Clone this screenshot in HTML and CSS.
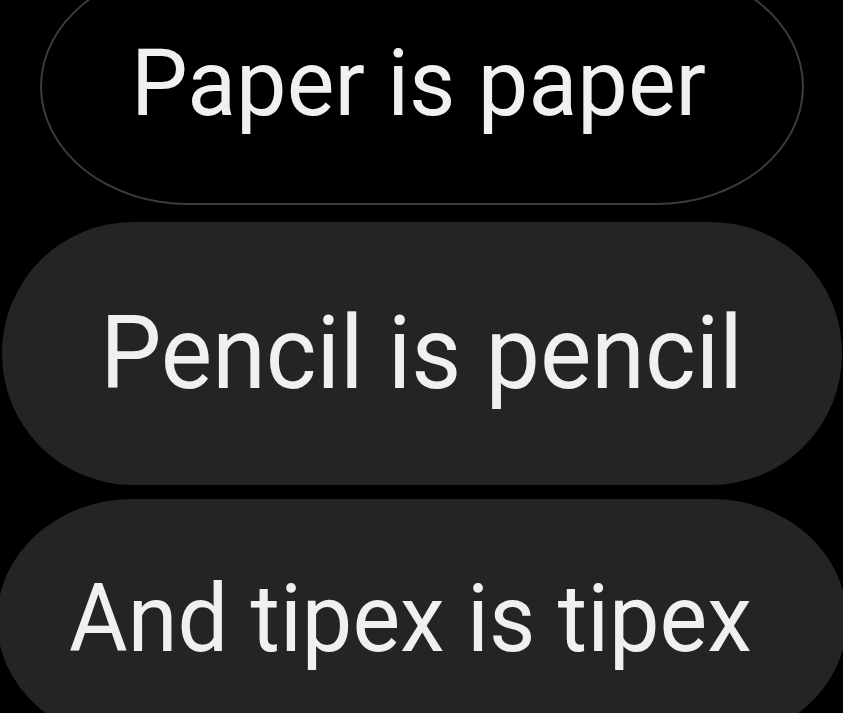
FILE: index.html
```html
<!DOCTYPE html>
<html lang="en">
<head>
<meta charset="utf-8">
<title>Chips</title>
<link rel="stylesheet" href="styles.css">
</head>
<body>
<div class="list">
  <div class="chip chip-outline"><span class="label label-1">Paper is paper</span></div>
  <div class="chip chip-filled chip-focus"><span class="label label-2">Pencil is pencil</span></div>
  <div class="chip chip-filled chip-last"><span class="label label-3">And tipex is tipex</span></div>
</div>
</body>
</html>
```
FILE: styles.css
```css
html, body {
  margin: 0;
  padding: 0;
  background: #000;
  width: 843px;
  height: 713px;
  overflow: hidden;
}

.list {
  display: flex;
  flex-direction: column;
  align-items: center;
  width: 843px;
}

.chip {
  display: flex;
  align-items: center;
  justify-content: center;
  box-sizing: border-box;
  flex-shrink: 0;
}

.label {
  font-family: Roboto, "Liberation Sans", sans-serif;
  color: #f0f0f0;
  white-space: nowrap;
  line-height: normal;
}

.chip-outline {
  width: 764px;
  height: 237px;
  margin-top: -32px;
  border: 2px solid #3b3b3b;
  border-radius: 150px / 120px;
  padding-bottom: 6px;
  padding-right: 6px;
}

.chip-filled {
  background: #242424;
}

.chip-focus {
  width: 840px;
  height: 263px;
  margin-top: 17px;
  border-radius: 131px;
  padding-bottom: 2px;
}

.chip-last {
  width: 850px;
  height: 242px;
  margin-top: 14px;
  border-radius: 135px / 121px;
  padding-right: 22px;
  padding-bottom: 4px;
}

.label-1 { font-size: 90px; transform: scaleY(1.02); }
.label-2 { font-size: 97px; transform: scaleY(1.05); }
.label-3 { font-size: 90px; transform: scaleY(1.05); }
```
